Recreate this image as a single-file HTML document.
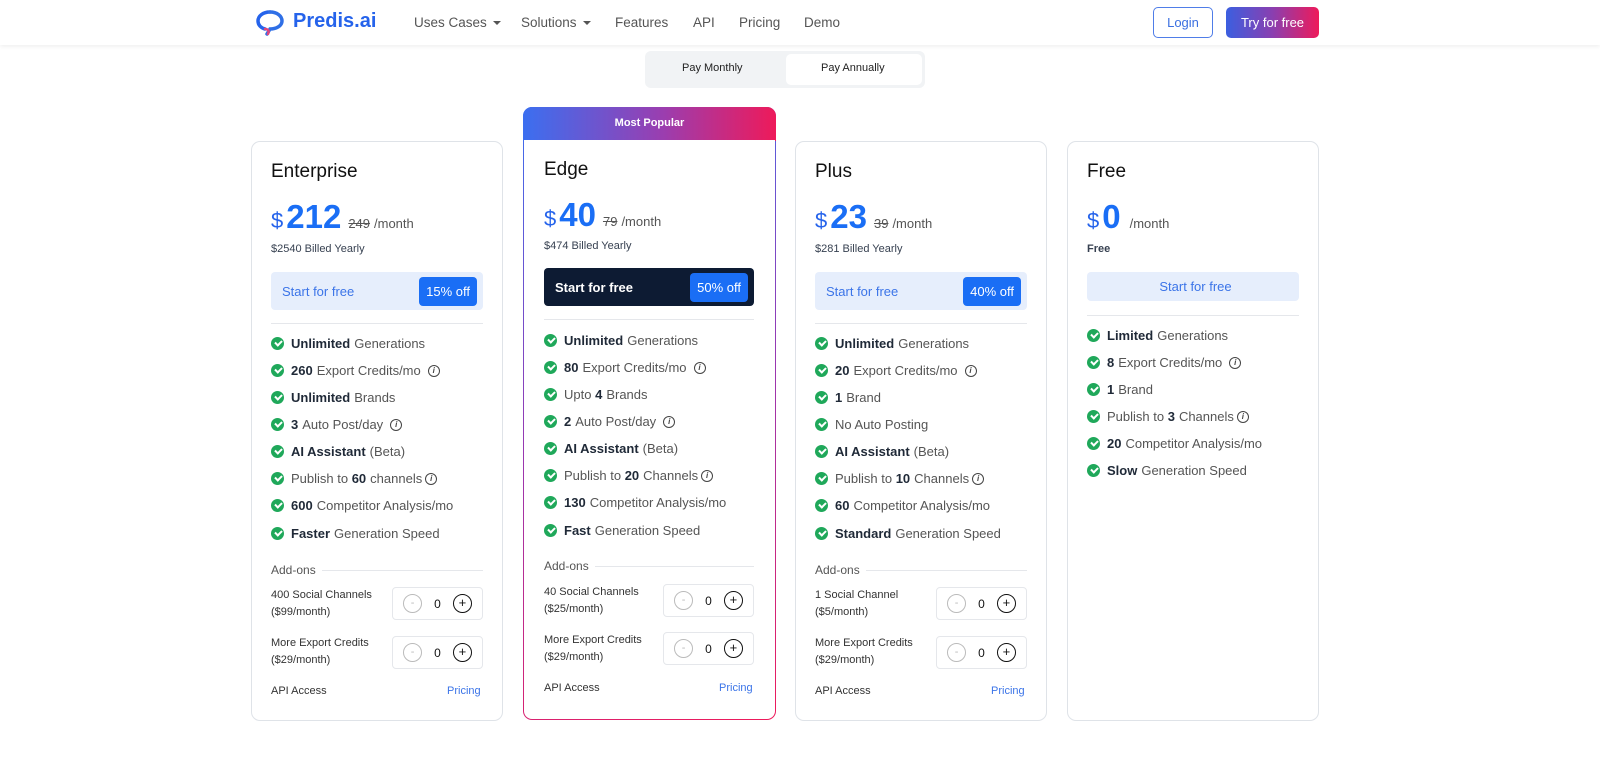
<!DOCTYPE html>
<html><head><meta charset="utf-8"><style>
*{box-sizing:border-box;margin:0;padding:0}
body{width:1600px;height:765px;background:#fff;font-family:"Liberation Sans",sans-serif;position:relative;overflow:hidden;color:#1f2937}
.hdr{position:absolute;left:0;top:0;width:1600px;height:45px;background:#fff;box-shadow:0 2px 4px rgba(0,0,0,.06)}
.nav{position:absolute;top:15px;font-size:13.5px;color:#555}
.caret{display:inline-block;border-left:4px solid transparent;border-right:4px solid transparent;border-top:4px solid #555;margin-left:6px;vertical-align:middle}
.card{position:absolute;width:252px;border:1px solid #dfe3e8;border-radius:9px;background:#fff}
.abs{position:absolute}
.title{font-size:19px;color:#111}
.price{display:flex;align-items:baseline;color:#1a6ef5}
.cur{font-size:22px;color:#2563eb;margin-right:3px}
.big{font-size:33px;font-weight:bold}
.old{font-size:13px;color:#555;text-decoration:line-through;margin-left:7px}
.pm{font-size:13px;color:#555;margin-left:4px}
.billed{font-size:11px;color:#374151}
.cta{height:38px;border-radius:4px;background:#e6eefc;display:flex;align-items:center;justify-content:space-between;padding:0 6px 0 11px;font-size:13px;color:#3b74e8}
.off{background:#1a6ef5;color:#fff;font-size:13px;border-radius:4px;padding:7px 7px}
.hr{height:1px;background:#e5e7eb}
.f{position:absolute;font-size:13px;color:#555;display:flex;align-items:center;white-space:nowrap}
.f b{color:#1f2937;margin-right:4px}
.ck{width:13px;height:13px;border-radius:50%;background:#1fa85a;margin-right:7px;position:relative;flex:none}
.ck:after{content:"";position:absolute;left:3.5px;top:2.5px;width:5px;height:3px;border-left:2px solid #fff;border-bottom:2px solid #fff;transform:rotate(-45deg)}
.i{display:inline-block;width:12px;height:12px;border:1px solid #444;border-radius:50%;font-size:8px;line-height:10px;text-align:center;color:#444;margin-left:7px;font-weight:bold}
.add{font-size:12px;color:#555;display:flex;align-items:center}
.add span{flex:1;height:1px;background:#e5e7eb;margin-left:6px}
.al{font-size:11px;color:#333;line-height:17px}
.box{width:91px;height:33px;border:1px solid #e5e7eb;border-radius:4px;display:flex;align-items:center;justify-content:space-around;padding:0 4px;font-size:12px;color:#111}
.mn{width:19px;height:19px;border:1px solid #bbb;border-radius:50%;color:#bbb;font-size:11px;line-height:16px;text-align:center}
.pl{width:19px;height:19px;border:1.5px solid #111;border-radius:50%;color:#111;font-size:13px;line-height:15px;text-align:center}
.api{font-size:11px;color:#333}
.pr{font-size:11px;color:#3b74e8}
</style></head><body>
<div class="hdr">
 <svg class="abs" style="left:256px;top:10px" width="30" height="26" viewBox="0 0 30 26"><path d="M14 2C7 2 2 6 2 11c0 4 3 7 7 8" fill="none" stroke="#2563eb" stroke-width="3.5" stroke-linecap="round"/><path d="M14 2c7 0 12 4 12 9 0 5-6 8-12 8l-3 5" fill="none" stroke="#2f6fe6" stroke-width="3.5" stroke-linecap="round"/><path d="M9 19c2 0 5 1 3 5" fill="none" stroke="#e0457a" stroke-width="2.5" stroke-linecap="round"/></svg>
 <div class="abs" style="left:293px;top:10px;font-size:20px;font-weight:bold;color:#2563eb">Predis.ai</div>
 <div class="nav" style="left:414px">Uses Cases<i class="caret"></i></div>
 <div class="nav" style="left:521px">Solutions<i class="caret"></i></div>
 <div class="nav" style="left:615px">Features</div>
 <div class="nav" style="left:693px">API</div>
 <div class="nav" style="left:739px">Pricing</div>
 <div class="nav" style="left:804px">Demo</div>
 <div class="abs" style="left:1153px;top:7px;width:60px;height:31px;border:1px solid #4f7de8;border-radius:5px;color:#3b6fe0;font-size:13px;text-align:center;line-height:29px">Login</div>
 <div class="abs" style="left:1226px;top:7px;width:93px;height:31px;border-radius:5px;background:linear-gradient(90deg,#3b5fe0,#8a3fb0,#ee1a5a);color:#fff;font-size:13px;text-align:center;line-height:31px">Try for free</div>
</div>
<div class="abs" style="left:645px;top:51px;width:280px;height:37px;background:#f1f3f5;border-radius:6px"></div>
<div class="abs" style="left:786px;top:54px;width:136px;height:31px;background:#fff;border-radius:5px"></div>
<div class="abs" style="left:682px;top:62px;font-size:11px;color:#222">Pay Monthly</div>
<div class="abs" style="left:821px;top:62px;font-size:11px;color:#222">Pay Annually</div>

<!-- Enterprise -->
<div class="card" style="left:251px;top:141px;height:580px"></div>
<div class="abs title" style="left:271px;top:161px">Enterprise</div>
<div class="abs price" style="left:271px;top:198px"><span class="cur">$</span><span class="big">212</span><span class="old">249</span><span class="pm">/month</span></div>
<div class="abs billed" style="left:271px;top:243px">$2540 Billed Yearly</div>
<div class="abs cta" style="left:271px;top:272px;width:212px">Start for free<span class="off">15% off</span></div>
<div class="abs hr" style="left:271px;top:323px;width:212px"></div>
<div class="f" style="left:271px;top:336px"><i class="ck"></i><b>Unlimited</b>Generations</div>
<div class="f" style="left:271px;top:363px"><i class="ck"></i><b>260</b>Export Credits/mo<i class="i">i</i></div>
<div class="f" style="left:271px;top:390px"><i class="ck"></i><b>Unlimited</b>Brands</div>
<div class="f" style="left:271px;top:417px"><i class="ck"></i><b>3</b>Auto Post/day<i class="i">i</i></div>
<div class="f" style="left:271px;top:444px"><i class="ck"></i><b>AI Assistant</b>(Beta)</div>
<div class="f" style="left:271px;top:471px"><i class="ck"></i>Publish to&nbsp;<b>60</b>channels<i class="i" style="margin-left:3px">i</i></div>
<div class="f" style="left:271px;top:498px"><i class="ck"></i><b>600</b>Competitor Analysis/mo</div>
<div class="f" style="left:271px;top:526px"><i class="ck"></i><b>Faster</b>Generation Speed</div>
<div class="abs add" style="left:271px;top:563px;width:212px">Add-ons<span></span></div>
<div class="abs al" style="left:271px;top:587px">400 Social Channels<br>($99/month)</div>
<div class="abs box" style="left:392px;top:587px"><div class="mn">-</div>0<div class="pl">+</div></div>
<div class="abs al" style="left:271px;top:635px">More Export Credits<br>($29/month)</div>
<div class="abs box" style="left:392px;top:636px"><div class="mn">-</div>0<div class="pl">+</div></div>
<div class="abs api" style="left:271px;top:685px">API Access</div>
<div class="abs pr" style="left:447px;top:685px">Pricing</div>

<!-- Edge -->
<div class="abs" style="left:523px;top:107px;width:253px;height:613px;border-radius:9px;background:linear-gradient(160deg,#3b6ff0,#9a36b0 50%,#ee1a5a)"></div>
<div class="abs" style="left:523px;top:107px;width:253px;height:34px;border-radius:9px 9px 0 0;background:linear-gradient(90deg,#3b6ff0,#9a3eb0 55%,#ee1a5a)"></div>
<div class="abs" style="left:524px;top:140px;width:251px;height:579px;border-radius:0 0 8px 8px;background:#fff"></div>
<div class="abs" style="left:523px;top:117px;width:253px;text-align:center;color:#fff;font-size:11px;font-weight:bold">Most Popular</div>
<div class="abs title" style="left:544px;top:159px">Edge</div>
<div class="abs price" style="left:544px;top:196px"><span class="cur">$</span><span class="big">40</span><span class="old">79</span><span class="pm">/month</span></div>
<div class="abs billed" style="left:544px;top:240px">$474 Billed Yearly</div>
<div class="abs cta" style="left:544px;top:268px;width:210px;background:#0d1b33;color:#fff;font-weight:bold">Start for free<span class="off" style="font-weight:normal">50% off</span></div>
<div class="abs hr" style="left:544px;top:319px;width:210px"></div>
<div class="f" style="left:544px;top:333px"><i class="ck"></i><b>Unlimited</b>Generations</div>
<div class="f" style="left:544px;top:360px"><i class="ck"></i><b>80</b>Export Credits/mo<i class="i">i</i></div>
<div class="f" style="left:544px;top:387px"><i class="ck"></i>Upto&nbsp;<b>4</b>Brands</div>
<div class="f" style="left:544px;top:414px"><i class="ck"></i><b>2</b>Auto Post/day<i class="i">i</i></div>
<div class="f" style="left:544px;top:441px"><i class="ck"></i><b>AI Assistant</b>(Beta)</div>
<div class="f" style="left:544px;top:468px"><i class="ck"></i>Publish to&nbsp;<b>20</b>Channels<i class="i" style="margin-left:3px">i</i></div>
<div class="f" style="left:544px;top:495px"><i class="ck"></i><b>130</b>Competitor Analysis/mo</div>
<div class="f" style="left:544px;top:523px"><i class="ck"></i><b>Fast</b>Generation Speed</div>
<div class="abs add" style="left:544px;top:559px;width:210px">Add-ons<span></span></div>
<div class="abs al" style="left:544px;top:584px">40 Social Channels<br>($25/month)</div>
<div class="abs box" style="left:663px;top:584px"><div class="mn">-</div>0<div class="pl">+</div></div>
<div class="abs al" style="left:544px;top:632px">More Export Credits<br>($29/month)</div>
<div class="abs box" style="left:663px;top:632px"><div class="mn">-</div>0<div class="pl">+</div></div>
<div class="abs api" style="left:544px;top:682px">API Access</div>
<div class="abs pr" style="left:719px;top:682px">Pricing</div>

<!-- Plus -->
<div class="card" style="left:795px;top:141px;height:580px"></div>
<div class="abs title" style="left:815px;top:161px">Plus</div>
<div class="abs price" style="left:815px;top:198px"><span class="cur">$</span><span class="big">23</span><span class="old">39</span><span class="pm">/month</span></div>
<div class="abs billed" style="left:815px;top:243px">$281 Billed Yearly</div>
<div class="abs cta" style="left:815px;top:272px;width:212px">Start for free<span class="off">40% off</span></div>
<div class="abs hr" style="left:815px;top:323px;width:212px"></div>
<div class="f" style="left:815px;top:336px"><i class="ck"></i><b>Unlimited</b>Generations</div>
<div class="f" style="left:815px;top:363px"><i class="ck"></i><b>20</b>Export Credits/mo<i class="i">i</i></div>
<div class="f" style="left:815px;top:390px"><i class="ck"></i><b>1</b>Brand</div>
<div class="f" style="left:815px;top:417px"><i class="ck"></i>No Auto Posting</div>
<div class="f" style="left:815px;top:444px"><i class="ck"></i><b>AI Assistant</b>(Beta)</div>
<div class="f" style="left:815px;top:471px"><i class="ck"></i>Publish to&nbsp;<b>10</b>Channels<i class="i" style="margin-left:3px">i</i></div>
<div class="f" style="left:815px;top:498px"><i class="ck"></i><b>60</b>Competitor Analysis/mo</div>
<div class="f" style="left:815px;top:526px"><i class="ck"></i><b>Standard</b>Generation Speed</div>
<div class="abs add" style="left:815px;top:563px;width:212px">Add-ons<span></span></div>
<div class="abs al" style="left:815px;top:587px">1 Social Channel<br>($5/month)</div>
<div class="abs box" style="left:936px;top:587px"><div class="mn">-</div>0<div class="pl">+</div></div>
<div class="abs al" style="left:815px;top:635px">More Export Credits<br>($29/month)</div>
<div class="abs box" style="left:936px;top:636px"><div class="mn">-</div>0<div class="pl">+</div></div>
<div class="abs api" style="left:815px;top:685px">API Access</div>
<div class="abs pr" style="left:991px;top:685px">Pricing</div>

<!-- Free -->
<div class="card" style="left:1067px;top:141px;height:580px"></div>
<div class="abs title" style="left:1087px;top:161px">Free</div>
<div class="abs price" style="left:1087px;top:198px"><span class="cur">$</span><span class="big">0</span><span class="pm" style="margin-left:9px">/month</span></div>
<div class="abs billed" style="left:1087px;top:243px;font-weight:bold">Free</div>
<div class="abs cta" style="left:1087px;top:272px;width:212px;height:29px;justify-content:center">Start for free</div>
<div class="abs hr" style="left:1087px;top:315px;width:212px"></div>
<div class="f" style="left:1087px;top:328px"><i class="ck"></i><b>Limited</b>Generations</div>
<div class="f" style="left:1087px;top:355px"><i class="ck"></i><b>8</b>Export Credits/mo<i class="i">i</i></div>
<div class="f" style="left:1087px;top:382px"><i class="ck"></i><b>1</b>Brand</div>
<div class="f" style="left:1087px;top:409px"><i class="ck"></i>Publish to&nbsp;<b>3</b>Channels<i class="i" style="margin-left:3px">i</i></div>
<div class="f" style="left:1087px;top:436px"><i class="ck"></i><b>20</b>Competitor Analysis/mo</div>
<div class="f" style="left:1087px;top:463px"><i class="ck"></i><b>Slow</b>Generation Speed</div>
</body></html>
